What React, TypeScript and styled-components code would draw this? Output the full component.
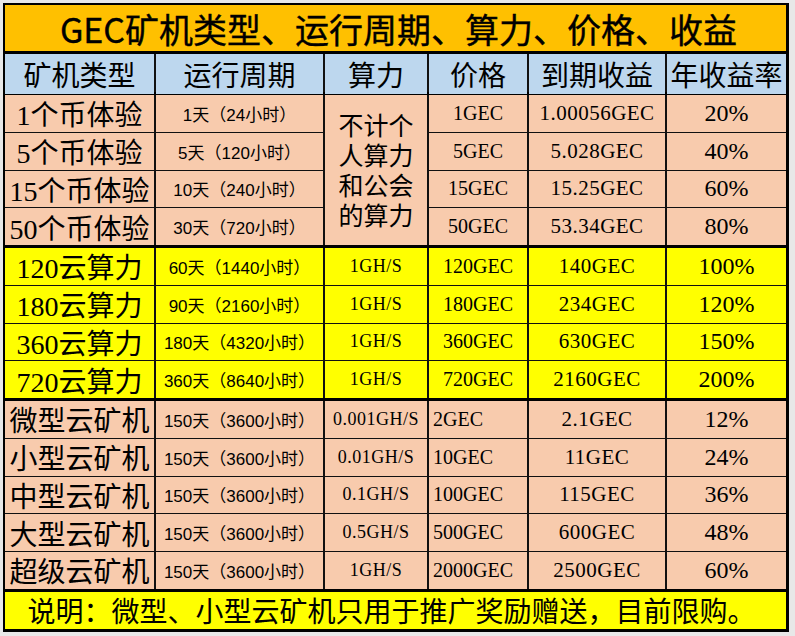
import styled, { createGlobalStyle } from 'styled-components';

const GlobalStyle = createGlobalStyle`
  html, body {
    margin: 0;
    background: #e8e8e8;
  }
`;

const COLS = '149px 167px 102px 98px 136px 119px';
const SERIF = '"Liberation Serif", "Noto Sans CJK SC", serif';
const SANS = '"Liberation Sans", "Noto Sans CJK SC", sans-serif';
const CJK = '"Noto Sans CJK SC", sans-serif';

const PEACH = '#f8cbad';
const YELLOW = '#ffff00';

const Page = styled.div`
  padding: 3px 0 0 3px;
  width: 795px;
  height: 636px;
  box-sizing: border-box;
`;

const Sheet = styled.div`
  width: 781px;
  border: 2px solid #000;
  border-right-width: 3px;
  border-bottom-width: 3px;
  background: #000;
  display: flex;
  flex-direction: column;
  gap: 3px;
  color: #000;
`;

const Title = styled.div`
  height: 46px;
  background: #ffc000;
  display: flex;
  align-items: center;
  justify-content: center;
  padding-left: 6px;
  font-family: ${CJK};
  font-size: 34px;
  font-weight: 400;
  -webkit-text-stroke: 0.4px #000;
`;

const HeaderRow = styled.div`
  display: grid;
  grid-template-columns: ${COLS};
  column-gap: 2px;
  height: 38px;
  background: #111;
`;

const HeaderCell = styled.div`
  background: #bdd7ee;
  display: flex;
  align-items: center;
  justify-content: center;
  font-family: ${CJK};
  font-size: 28px;
`;

const Section = styled.div`
  display: grid;
  grid-template-columns: ${COLS};
  grid-auto-rows: 36.75px;
  gap: 1px 2px;
  background: #111;
`;

type Kind = 'name' | 'period' | 'power' | 'price' | 'income' | 'rate';

const fonts: Record<Kind, string> = {
  name: `28px ${SERIF}`,
  period: `17px ${SANS}`,
  power: `18px ${SERIF}`,
  price: `20px ${SERIF}`,
  income: `21px ${SERIF}`,
  rate: `24px ${SERIF}`,
};

const Cell = styled.div<{ $bg: string; $kind: Kind; $left?: boolean }>`
  background: ${(p) => p.$bg};
  display: flex;
  align-items: center;
  justify-content: ${(p) => (p.$left ? 'flex-start' : 'center')};
  padding-left: ${(p) => (p.$left ? '4px' : '0')};
  font: ${(p) => fonts[p.$kind]};
  letter-spacing: ${(p) => (p.$kind === 'income' || p.$kind === 'power' ? '0.5px' : '0')};
  white-space: nowrap;
  overflow: hidden;
`;

const Merged = styled.div`
  grid-column: 3;
  grid-row: 1 / 5;
  background: ${PEACH};
  display: flex;
  flex-direction: column;
  align-items: center;
  justify-content: center;
  padding-top: 4px;
  font-family: ${SERIF};
  font-size: 25px;
  line-height: 30px;
`;

const Footer = styled.div`
  height: 37px;
  background: ${YELLOW};
  display: flex;
  align-items: center;
  justify-content: center;
  font-family: ${SERIF};
  font-size: 28px;
  padding-right: 8px;
`;

const headers = ['矿机类型', '运行周期', '算力', '价格', '到期收益', '年收益率'];

const trial = [
  ['1个币体验', '1天（24小时）', '1GEC', '1.00056GEC', '20%'],
  ['5个币体验', '5天（120小时）', '5GEC', '5.028GEC', '40%'],
  ['15个币体验', '10天（240小时）', '15GEC', '15.25GEC', '60%'],
  ['50个币体验', '30天（720小时）', '50GEC', '53.34GEC', '80%'],
];

const cloud = [
  ['120云算力', '60天（1440小时）', '1GH/S', '120GEC', '140GEC', '100%'],
  ['180云算力', '90天（2160小时）', '1GH/S', '180GEC', '234GEC', '120%'],
  ['360云算力', '180天（4320小时）', '1GH/S', '360GEC', '630GEC', '150%'],
  ['720云算力', '360天（8640小时）', '1GH/S', '720GEC', '2160GEC', '200%'],
];

const miners = [
  ['微型云矿机', '150天（3600小时）', '0.001GH/S', '2GEC', '2.1GEC', '12%'],
  ['小型云矿机', '150天（3600小时）', '0.01GH/S', '10GEC', '11GEC', '24%'],
  ['中型云矿机', '150天（3600小时）', '0.1GH/S', '100GEC', '115GEC', '36%'],
  ['大型云矿机', '150天（3600小时）', '0.5GH/S', '500GEC', '600GEC', '48%'],
  ['超级云矿机', '150天（3600小时）', '1GH/S', '2000GEC', '2500GEC', '60%'],
];

const kinds: Kind[] = ['name', 'period', 'power', 'price', 'income', 'rate'];

const App = () => (
  <Page>
    <GlobalStyle />
    <Sheet>
      <Title>GEC矿机类型、运行周期、算力、价格、收益</Title>
      <HeaderRow>
        {headers.map((h) => (
          <HeaderCell key={h}>{h}</HeaderCell>
        ))}
      </HeaderRow>

      <Section>
        <Merged>
          <span>不计个</span>
          <span>人算力</span>
          <span>和公会</span>
          <span>的算力</span>
        </Merged>
        {trial.map((r) => [
          <Cell key={r[0] + 'a'} $bg={PEACH} $kind="name">{r[0]}</Cell>,
          <Cell key={r[0] + 'b'} $bg={PEACH} $kind="period">{r[1]}</Cell>,
          <Cell key={r[0] + 'c'} $bg={PEACH} $kind="price">{r[2]}</Cell>,
          <Cell key={r[0] + 'd'} $bg={PEACH} $kind="income">{r[3]}</Cell>,
          <Cell key={r[0] + 'e'} $bg={PEACH} $kind="rate">{r[4]}</Cell>,
        ])}
      </Section>

      <Section>
        {cloud.map((r) =>
          r.map((v, i) => (
            <Cell key={r[0] + i} $bg={YELLOW} $kind={kinds[i]}>{v}</Cell>
          ))
        )}
      </Section>

      <Section>
        {miners.map((r) =>
          r.map((v, i) => (
            <Cell key={r[0] + i} $bg={PEACH} $kind={kinds[i]} $left={i === 3}>{v}</Cell>
          ))
        )}
      </Section>

      <Footer>说明：微型、小型云矿机只用于推广奖励赠送，目前限购。</Footer>
    </Sheet>
  </Page>
);

export default App;
